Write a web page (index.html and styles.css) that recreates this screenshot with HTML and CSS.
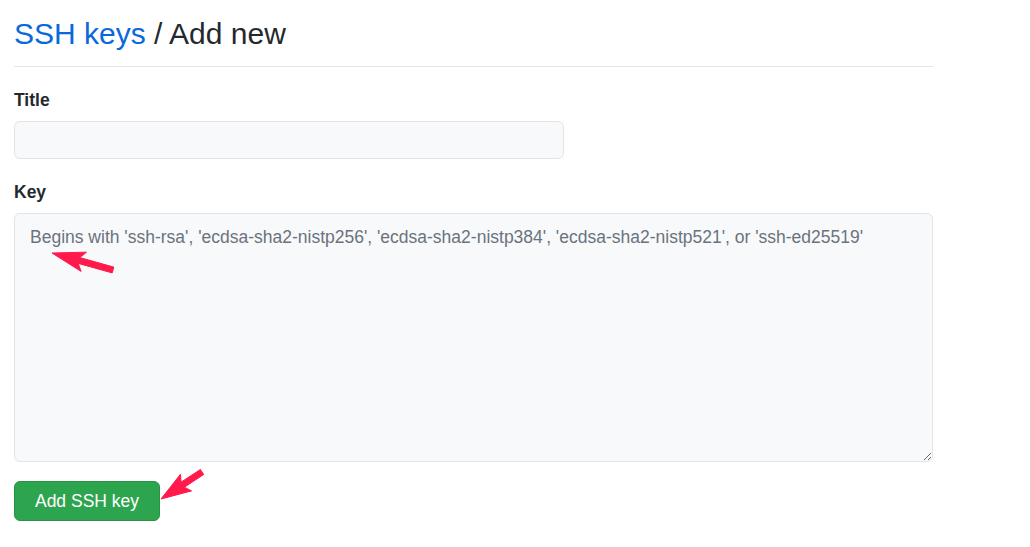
FILE: index.html
```html
<!DOCTYPE html>
<html lang="en">
<head>
<meta charset="utf-8">
<title>SSH keys / Add new</title>
<link rel="stylesheet" href="styles.css">
</head>
<body>
<main class="page">
  <div class="subhead">
    <h2 class="subhead-heading"><a class="crumb" href="#">SSH keys</a> / Add new</h2>
  </div>
  <form class="form">
    <div class="form-group">
      <label class="form-label" for="title">Title</label>
      <input class="form-input title-input" id="title" type="text">
    </div>
    <div class="form-group">
      <label class="form-label" for="key">Key</label>
      <textarea class="form-input key-input" id="key" placeholder="Begins with 'ssh-rsa', 'ecdsa-sha2-nistp256', 'ecdsa-sha2-nistp384', 'ecdsa-sha2-nistp521', or 'ssh-ed25519'"></textarea>
    </div>
    <div class="actions">
      <button class="btn-primary" type="button">Add SSH key</button>
    </div>
  </form>
</main>
<svg class="annotations" width="1030" height="547" viewBox="0 0 1030 547" aria-hidden="true">
  <polygon class="arrow" points="52,253 86.5,252.2 79.8,257.6 113.8,267.1 112.2,272.9 78.2,263.4 81.1,271.4"/>
  <polygon class="arrow" points="161,499 180.5,474.2 181,482.2 200.4,469.5 203.7,474.5 184.4,487.2 191.5,490.9"/>
</svg>
</body>
</html>
```
FILE: styles.css
```css
html, body {
  margin: 0;
  padding: 0;
  background: #ffffff;
}

body {
  font-family: "Liberation Sans", Arial, sans-serif;
  color: #24292e;
  position: relative;
}

.page {
  width: 919px;
  padding: 15px 0 0 14px;
}

.subhead {
  border-bottom: 1px solid #e1e4e8;
  padding-bottom: 14px;
}

.subhead-heading {
  margin: 0;
  font-size: 30px;
  font-weight: 400;
  line-height: 37px;
  color: #24292e;
}

.crumb {
  color: #0969da;
  text-decoration: none;
}

.form {
  display: flex;
  flex-direction: column;
  padding-top: 22px;
  gap: 22px;
}

.form-group {
  display: flex;
  flex-direction: column;
  gap: 9px;
}

.form-label {
  font-size: 17.5px;
  font-weight: 700;
  line-height: 23px;
  color: #24292e;
}

.form-input {
  box-sizing: border-box;
  font-family: "Liberation Sans", Arial, sans-serif;
  font-size: 17.5px;
  line-height: 24px;
  color: #24292e;
  background: #f8f9fb;
  border: 1px solid #e1e4e8;
  border-radius: 6px;
  outline: none;
  margin: 0;
}

.title-input {
  width: 550px;
  height: 38px;
  padding: 6px 12px;
}

.key-input {
  width: 919px;
  height: 249px;
  padding: 11px 15px;
  resize: both;
}

.key-input::placeholder {
  color: #6a737d;
  opacity: 1;
}

.actions {
  display: flex;
  margin-top: -3px;
}

.btn-primary {
  box-sizing: border-box;
  height: 40px;
  width: 146px;
  padding: 0 18px;
  font-family: "Liberation Sans", Arial, sans-serif;
  font-size: 17.5px;
  color: #ffffff;
  background: #2da44e;
  border: 1px solid #2a9147;
  border-radius: 6px;
  cursor: pointer;
}

.annotations {
  position: absolute;
  left: 0;
  top: 0;
  pointer-events: none;
}

.arrow {
  fill: #ff1a4b;
  stroke: #ff1a4b;
  stroke-width: 1;
  stroke-linejoin: round;
}
```
